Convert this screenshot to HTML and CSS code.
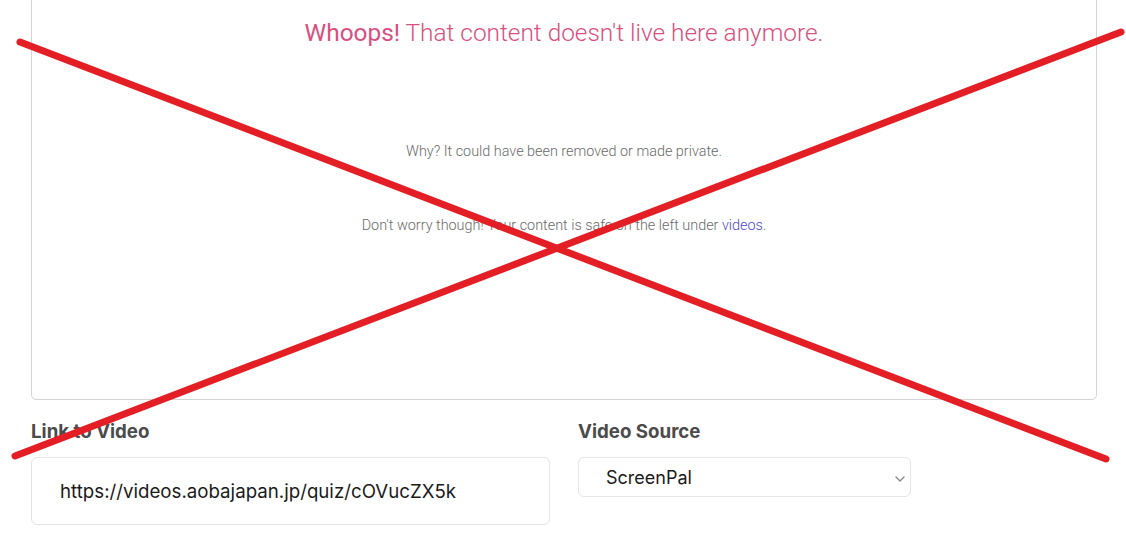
FILE: index.html
```html
<!DOCTYPE html>
<html lang="en">
<head>
<meta charset="utf-8">
<title>Video</title>
<link rel="stylesheet" href="styles.css">
</head>
<body>
<div class="page">
  <div class="frame">
    <h1 class="title"><span class="strong">Whoops!</span> That content doesn't live here anymore.</h1>
    <p class="why">Why? It could have been removed or made private.</p>
    <p class="worry">Don't worry though! Your content is safe on the left under <a class="link" href="#">videos</a>.</p>
  </div>
  <div class="form-row">
    <div class="field">
      <label class="label">Link to Video</label>
      <div class="input">https://videos.aobajapan.jp/quiz/cOVucZX5k</div>
    </div>
    <div class="field">
      <label class="label">Video Source</label>
      <div class="select">
        <span>ScreenPal</span>
        <svg class="chev" width="10" height="6" viewBox="0 0 10 6"><path d="M1 1l4 4 4-4" fill="none" stroke="#8a8a8a" stroke-width="1.4" stroke-linecap="round" stroke-linejoin="round"/></svg>
      </div>
    </div>
  </div>
</div>
<svg class="cross" width="1126" height="541" viewBox="0 0 1126 541">
  <line x1="20" y1="42" x2="1106" y2="459" stroke="#e41e25" stroke-width="7" stroke-linecap="round"/>
  <line x1="15" y1="456" x2="1121" y2="32" stroke="#e41e25" stroke-width="7" stroke-linecap="round"/>
</svg>
</body>
</html>
```
FILE: styles.css
```css
html, body {
  margin: 0;
  padding: 0;
  background: #fff;
  overflow: hidden;
}
body {
  font-family: Roboto, "Liberation Sans", sans-serif;
}
.page {
  padding: 0 29px 0 31px;
}
.frame {
  margin-top: -20px;
  height: 420px;
  box-sizing: border-box;
  border: 1px solid #d4d4d4;
  border-radius: 0 0 5px 5px;
  padding-top: 36px;
  text-align: center;
}
.title {
  margin: 0;
  font-size: 24.4px;
  line-height: 32px;
  font-weight: 300;
  color: #d94f80;
}
.strong {
  font-weight: 400;
}
.why {
  margin: 93px 0 0;
  font-size: 14.4px;
  line-height: 20px;
  font-weight: 300;
  color: #6a6a6a;
}
.worry {
  margin: 54px 0 0;
  font-size: 14.4px;
  line-height: 20px;
  font-weight: 300;
  color: #6a6a6a;
}
.link {
  color: #4a4acb;
  text-decoration: none;
}
.form-row {
  display: grid;
  grid-template-columns: 1fr 1fr;
  column-gap: 28px;
  margin-top: 20px;
  font-family: Inter, "Liberation Sans", sans-serif;
}
.field {
  display: flex;
  flex-direction: column;
  align-items: flex-start;
}
.label {
  font-size: 18.7px;
  line-height: 24px;
  font-weight: 700;
  color: #4b4b4b;
  margin-bottom: 13px;
}
.input {
  box-sizing: border-box;
  width: 100%;
  height: 68px;
  border: 1px solid #e4e4e7;
  border-radius: 6px;
  padding-left: 28px;
  display: flex;
  align-items: center;
  font-size: 18.7px;
  color: #1a1a1a;
}
.select {
  position: relative;
  box-sizing: border-box;
  width: 333px;
  height: 40px;
  border: 1px solid #e4e4e7;
  border-radius: 6px;
  padding-left: 27px;
  display: flex;
  align-items: center;
  font-size: 18px;
  color: #1a1a1a;
}
.chev {
  position: absolute;
  right: 5px;
  top: 18px;
}
.cross {
  position: absolute;
  left: 0;
  top: 0;
  pointer-events: none;
}
```
